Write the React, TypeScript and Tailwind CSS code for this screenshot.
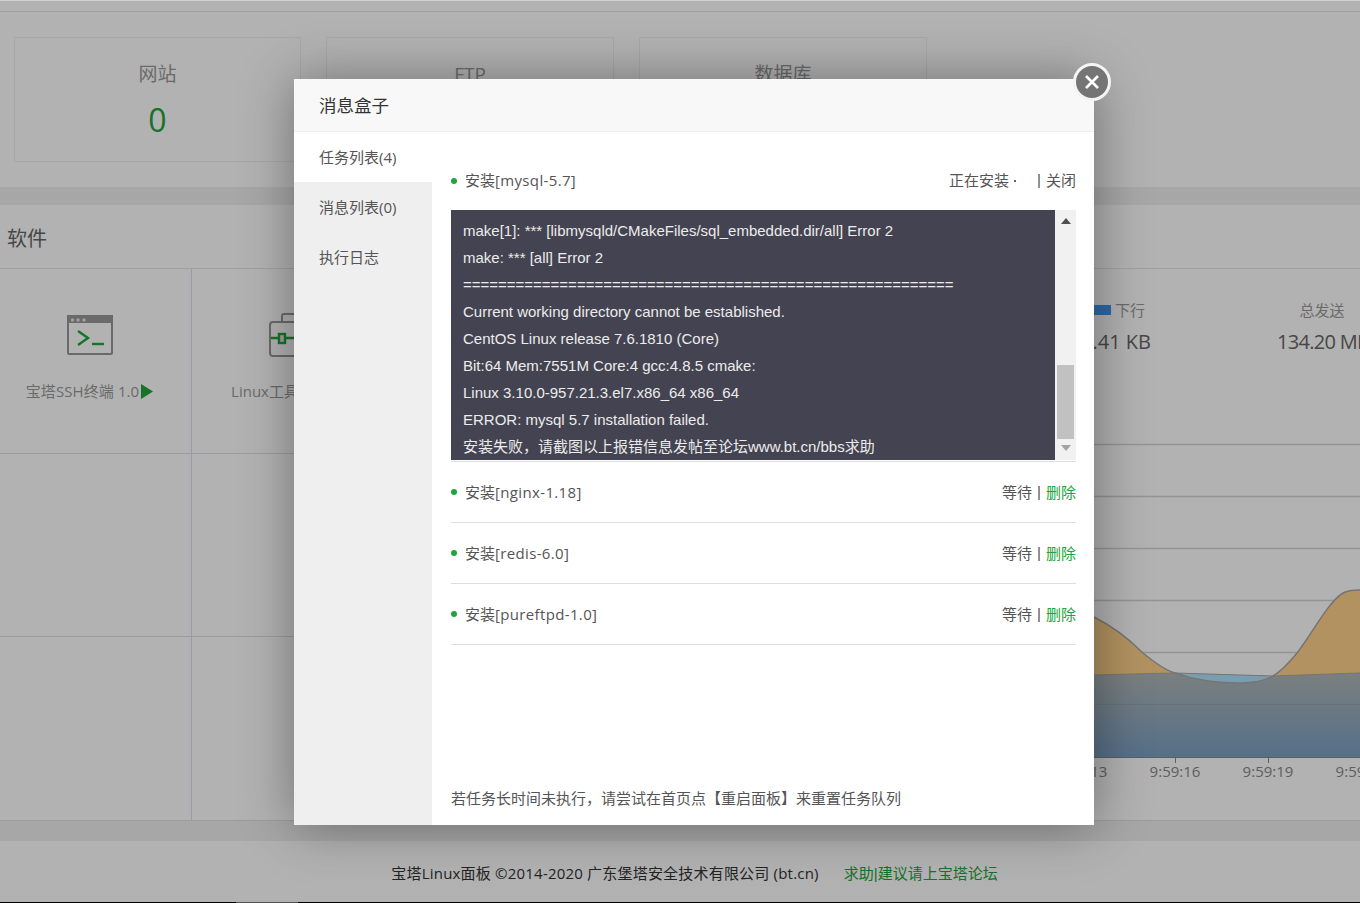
const font = "[font-family:'Open_Sans','Noto_Sans_CJK_SC',sans-serif]";

function TerminalIcon() {
  return (
    <svg width="46" height="40" viewBox="0 0 46 40" fill="none">
      <rect x="1" y="1" width="44" height="38" rx="1" fill="none" stroke="#999" strokeWidth="2" />
      <rect x="0" y="0" width="46" height="8" fill="#999" />
      <circle cx="5.5" cy="5" r="1.7" fill="#e8e8e8" />
      <circle cx="11" cy="5" r="1.7" fill="#e8e8e8" />
      <circle cx="17" cy="5" r="1.7" fill="#e8e8e8" />
      <path d="M11 16 L21 23 L11 30" stroke="#20a53a" strokeWidth="2.4" />
      <path d="M25 29 H37" stroke="#20a53a" strokeWidth="2.4" />
    </svg>
  );
}

function ToolboxIcon() {
  return (
    <svg width="46" height="44" viewBox="0 0 46 44" fill="none">
      <path d="M13 9 V3 Q13 1 15 1 H31 Q33 1 33 3 V9" stroke="#999" strokeWidth="2" />
      <rect x="1" y="9" width="44" height="34" rx="3" stroke="#999" strokeWidth="2" />
      <path d="M2 25 H44" stroke="#20a53a" strokeWidth="2.4" />
      <rect x="10" y="21" width="6" height="9" fill="#e8e8e8" stroke="#20a53a" strokeWidth="2.4" />
    </svg>
  );
}

function StatCard({ title, value, width }: { title: string; value?: string; width: string }) {
  return (
    <div className={`${width} h-[125px] shrink-0 border border-[#f0f0f0] flex flex-col items-center pt-[22px]`}>
      <div className="text-[19px] leading-[28px] text-[#999]">{title}</div>
      {value && <div className="text-[32px] leading-[44px] mt-[10px] text-[#20a53a]">{value}</div>}
    </div>
  );
}

function PlayMark() {
  return (
    <svg width="12" height="15" viewBox="0 0 12 15" className="ml-[2px]">
      <path d="M0 0 L12 7.5 L0 15 Z" fill="#20a53a" />
    </svg>
  );
}

function Chart() {
  const orange =
    "M1094 617 C1120 630 1135 645 1143 653 C1155 663 1165 670 1175 673 C1195 680 1215 683 1237 683 C1252 683 1265 681 1273 676 C1280 672 1288 664 1297 653 C1312 634 1328 602 1343 593 C1348 590 1354 590 1360 590";
  const sliver = "M1175 673 C1195 680 1215 683 1237 683 C1252 683 1265 681 1273 676 Z";
  const blue = "M680 677 L1094 675 L1175 673 L1273 676 L1360 673";
  return (
    <svg width="680" height="340" viewBox="680 440 680 340" className="block">
      <defs>
        <linearGradient id="blueFill" x1="0" y1="0" x2="0" y2="1">
          <stop offset="0" stopColor="#b1b7b7" />
          <stop offset="1" stopColor="#7ba0c4" />
        </linearGradient>
      </defs>
      {[444, 496, 548, 600, 652].map((y) => (
        <path key={y} d={`M680 ${y}.5 H1360`} stroke="#d4d4d4" strokeWidth="1.4" />
      ))}
      <path d={`${orange} V757 H1094 Z`} fill="#ffd18a" />
      <path d={`${blue} V757 H680 Z`} fill="url(#blueFill)" />
      <path d={sliver} fill="#aee3ff" />
      <path d="M680 704.5 H1360" stroke="#8a8f92" strokeOpacity="0.3" />
      <path d={orange} stroke="#a8a8a8" fill="none" strokeWidth="1.5" />
      <path d={blue} stroke="#a8a8a8" fill="none" />
      <path d="M680 757.5 H1360" stroke="#888" />
      {[1082, 1175, 1268, 1361].map((x) => (
        <path key={x} d={`M${x}.5 757 V763`} stroke="#888" />
      ))}
      <g fill="#888" fontSize="15" textAnchor="middle" fontFamily="'Open Sans', sans-serif">
        <text x="1082" y="777">9:59:13</text>
        <text x="1175" y="777">9:59:16</text>
        <text x="1268" y="777">9:59:19</text>
        <text x="1361" y="777">9:59:22</text>
      </g>
    </svg>
  );
}

function Page() {
  return (
    <div className="h-[903px] overflow-hidden bg-[#f0f0f0] flex flex-col">
      <div className="h-px bg-[#d0d0d0]" />
      <div className="h-[186px] bg-white">
        <div className="h-[10px]" />
        <div className="h-[165px] border-t border-[#e6e6e6] pt-[25px] pl-[14px] flex gap-[25px]">
          <StatCard title="网站" value="0" width="w-[287px]" />
          <StatCard title="FTP" width="w-[288px]" />
          <StatCard title="数据库" width="w-[288px]" />
        </div>
      </div>
      <div className="h-[18px]" />
      <div className="h-[616px] bg-white border-b border-[#dedeee]">
        <div className="h-[64px] border-b border-[#e6e6e6] pl-[7px] pt-[19px] text-[20px] leading-[30px] text-[#666]">软件</div>
        <div className="flex h-[551px]">
          <div className="w-[680px] shrink-0 flex flex-col">
            <div className="h-[185px] flex border-b border-[#dedeee]">
              <div className="w-[192px] border-r border-[#dedeee] flex flex-col items-center pt-[46px] pr-[12px]">
                <TerminalIcon />
                <div className="mt-[26px] text-[15px] leading-[20px] tracking-[0.1px] text-[#999] flex items-center whitespace-nowrap">
                  宝塔SSH终端 1.0
                  <PlayMark />
                </div>
              </div>
              <div className="w-[200px] flex flex-col items-center pt-[44px]">
                <ToolboxIcon />
                <div className="mt-[24px] text-[15px] leading-[20px] text-[#999] flex items-center whitespace-nowrap">
                  Linux工具箱 1.3
                  <PlayMark />
                </div>
              </div>
            </div>
            <div className="h-[183px] flex border-b border-[#dedeee]">
              <div className="w-[192px] border-r border-[#dedeee]" />
            </div>
            <div className="flex-1 flex">
              <div className="w-[192px] border-r border-[#dedeee]" />
            </div>
          </div>
          <div className="w-[680px] shrink-0">
            <div className="h-[171px] pt-[31px] flex">
              <div className="w-[471px] shrink-0 flex flex-col items-end">
                <div className="flex items-center w-[471px] pl-[395px] h-[20px] text-[15px] text-[#999] whitespace-nowrap">
                  <span className="w-[36px] h-[10px] bg-[#4099f3] mr-[4px] shrink-0" />
                  下行
                </div>
                <div className="mt-[7px] text-[20px] leading-[30px] text-[#666] whitespace-nowrap">1.41 KB</div>
              </div>
              <div className="ml-[126px] w-[90px] shrink-0 flex flex-col items-center">
                <div className="h-[20px] leading-[20px] text-[15px] text-[#999] whitespace-nowrap">总发送</div>
                <div className="self-start mt-[7px] text-[20px] leading-[30px] tracking-[-0.7px] text-[#666] whitespace-nowrap">134.20 MB</div>
              </div>
            </div>
            <Chart />
          </div>
        </div>
      </div>
      <div className="h-[20px]" />
      <div className="h-[61px] bg-white flex items-center justify-center pl-[29px] pt-[4px] text-[15px] text-[#333] whitespace-nowrap">
        <span className="tracking-[0.2px]">宝塔Linux面板 ©2014-2020 广东堡塔安全技术有限公司 (bt.cn)</span>
        <span className="ml-[25px] text-[#20a53a]">
          求助<span className="[font-family:'Liberation_Sans',sans-serif]">|</span>建议请上宝塔论坛
        </span>
      </div>
      <div className="h-px bg-black pl-[236px]">
        <div className="w-[62px] h-px bg-[#777]" />
      </div>
    </div>
  );
}

function TaskRow({ name }: { name: string }) {
  return (
    <div className="h-[61px] border-b border-[#ddd] flex items-center justify-between">
      <div className="flex items-center">
        <span className="w-[6px] h-[6px] rounded-full bg-[#20a53a] mr-[8px]" />
        安装<span className="tracking-[0.35px]">[{name}]</span>
      </div>
      <div className="flex items-center h-[22px] pt-px whitespace-nowrap">
        <span>等待</span>
        <span className="mx-[5px] [font-family:'Liberation_Sans',sans-serif]">|</span>
        <span className="text-[#20a53a]">删除</span>
      </div>
    </div>
  );
}

const logLines = [
  "make[1]: *** [libmysqld/CMakeFiles/sql_embedded.dir/all] Error 2",
  "make: *** [all] Error 2",
  "=".repeat(56),
  "Current working directory cannot be established.",
  "CentOS Linux release 7.6.1810 (Core)",
  "Bit:64 Mem:7551M Core:4 gcc:4.8.5 cmake:",
  "Linux 3.10.0-957.21.3.el7.x86_64 x86_64",
  "ERROR: mysql 5.7 installation failed.",
  "安装失败\uFF0C请截图以上报错信息发帖至论坛www.bt.cn/bbs求助",
];

function MessageBox() {
  return (
    <div className="absolute left-[294px] top-[79px] w-[800px] h-[746px] bg-white shadow-[1px_1px_50px_rgba(0,0,0,0.38)] text-[15px] text-[#555]">
      <div className="h-[53px] bg-[#f8f8f8] border-b border-[#eee] pl-[25px] pt-px flex items-center text-[17.5px] text-[#333]">消息盒子</div>
      <div className="flex h-[693px]">
        <div className="w-[138px] bg-[#efefef] shrink-0 text-[#555]">
          <div className="h-[50px] bg-white pl-[25px] flex items-center">任务列表(4)</div>
          <div className="h-[50px] pl-[25px] flex items-center">消息列表(0)</div>
          <div className="h-[50px] pl-[25px] flex items-center">执行日志</div>
        </div>
        <div className="flex-1 pl-[19px] pr-[18px] pt-[19px] flex flex-col">
          <div className="border-b border-[#ddd] h-[311px]">
            <div className="h-[59px] flex items-center justify-between">
              <div className="flex items-center">
                <span className="w-[6px] h-[6px] rounded-full bg-[#20a53a] mr-[8px]" />
                安装<span className="tracking-[0.35px]">[mysql-5.7]</span>
              </div>
              <div className="flex items-center whitespace-nowrap">
                <span>正在安装</span>
                <span className="ml-[5px] w-[2px] h-[2px] bg-[#666]" />
                <span className="ml-[21px] mr-[5px] [font-family:'Liberation_Sans',sans-serif]">|</span>
                <span>关闭</span>
              </div>
            </div>
            <div className="flex h-[250px]">
              <div className="w-[604px] h-[250px] overflow-hidden bg-[#444351] pl-[12px] pt-[7px] text-[#ececec] text-[15px] leading-[27px] [font-family:'Liberation_Sans','Noto_Sans_CJK_SC',sans-serif] whitespace-nowrap">
                {logLines.map((line, i) => (
                  <div key={i}>{line}</div>
                ))}
              </div>
              <div className="w-[21px] bg-[#f1f1f1] flex flex-col items-center">
                <svg width="10" height="6" viewBox="0 0 10 6" className="mt-[8px]">
                  <path d="M0 6 L5 0 L10 6 Z" fill="#505050" />
                </svg>
                <div className="w-[17px] h-[74px] bg-[#c1c1c1] mt-[141px]" />
                <svg width="10" height="6" viewBox="0 0 10 6" className="mt-[6px]">
                  <path d="M0 0 L5 6 L10 0 Z" fill="#a3a3a3" />
                </svg>
              </div>
            </div>
          </div>
          <TaskRow name="nginx-1.18" />
          <TaskRow name="redis-6.0" />
          <TaskRow name="pureftpd-1.0" />
          <div className="mt-auto h-[38px] text-[#555]">{"若任务长时间未执行\uFF0C请尝试在首页点【重启面板】来重置任务队列"}</div>
        </div>
      </div>
      <div className="absolute -right-[17px] -top-[16px] w-[38px] h-[38px] rounded-full bg-[#757575] border-[3px] border-[#f4f4f4] flex items-center justify-center">
        <svg width="16" height="16" viewBox="0 0 16 16">
          <path d="M2 2 L14 14 M14 2 L2 14" stroke="#fff" strokeWidth="2.6" />
        </svg>
      </div>
    </div>
  );
}

export default function App() {
  return (
    <div className={`relative h-[903px] overflow-hidden ${font}`}>
      <Page />
      <div className="absolute inset-x-0 top-px bottom-0 bg-black/30" />
      <MessageBox />
    </div>
  );
}
